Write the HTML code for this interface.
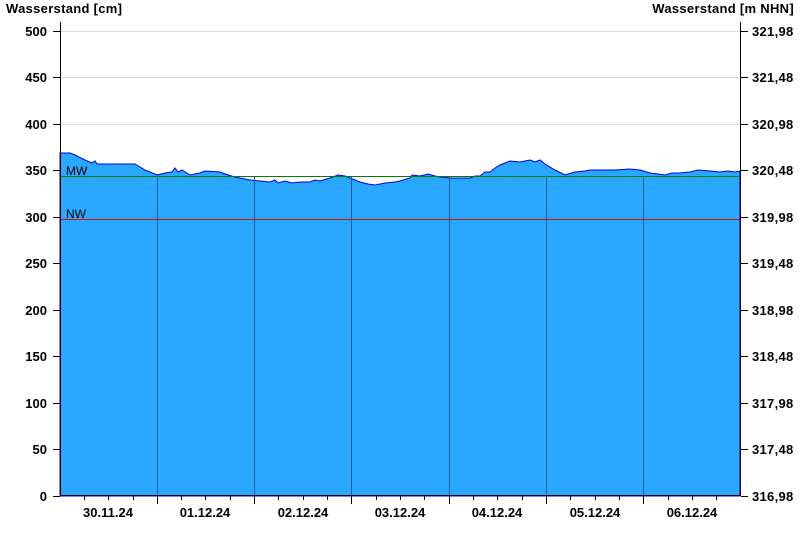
<!DOCTYPE html>
<html><head><meta charset="utf-8"><style>
html,body{margin:0;padding:0;background:#fff;width:800px;height:550px;overflow:hidden}
svg text{font-family:"Liberation Sans",Arial,sans-serif;font-weight:bold;font-size:13px;fill:#000}
</style></head><body>
<svg width="800" height="550" xmlns="http://www.w3.org/2000/svg">
<text x="6" y="13" style="letter-spacing:0.3px">Wasserstand [cm]</text>
<text x="794" y="13" text-anchor="end" style="letter-spacing:0.3px">Wasserstand [m NHN]</text>
<g stroke="#dcdcdc" stroke-width="1">
<line x1="60" y1="31.5" x2="740" y2="31.5"/><line x1="60" y1="77.5" x2="740" y2="77.5"/>
<line x1="60" y1="124.5" x2="740" y2="124.5"/>
</g>
<path fill="#2aa8ff" stroke="#0000e0" stroke-width="1" d="M60,496 L60,153 L70,153 L75,155 L85,160 L92,163 L95,161 L97,164 L135,164 L145,170 L150,172 L157,175 L165,173 L172,172 L175,168 L178,172 L182,170 L190,175 L200,173 L205,171 L220,172 L228,175 L235,177 L250,180 L260,181 L270,182 L275,180 L278,183 L285,181 L292,183 L300,182 L310,182 L315,180 L320,181 L330,178 L338,175 L345,176 L350,178 L360,182 L368,184 L375,185 L385,183 L395,182 L400,181 L410,178 L412,175 L420,176 L428,174 L435,176 L440,177 L450,178 L470,178 L475,176 L480,176 L485,172 L490,172 L495,168 L500,165 L505,163 L510,161 L520,162 L530,160 L535,162 L540,160 L545,164 L555,170 L565,175 L575,172 L585,171 L590,170 L600,170 L615,170 L630,169 L640,170 L650,173 L658,174 L665,175 L672,173 L680,173 L690,172 L698,170 L710,171 L720,172 L728,171 L735,172 L740,171 L740,496 Z"/>
<line x1="60" y1="176.5" x2="740" y2="176.5" stroke="#008000" stroke-width="1"/>
<line x1="60" y1="219.5" x2="740" y2="219.5" stroke="#d01010" stroke-width="1"/>
<g stroke="#1f5f8f" stroke-width="1">
<line x1="157.5" y1="176" x2="157.5" y2="496"/><line x1="254.5" y1="176" x2="254.5" y2="496"/>
<line x1="351.5" y1="176" x2="351.5" y2="496"/><line x1="449.5" y1="176" x2="449.5" y2="496"/>
<line x1="546.5" y1="176" x2="546.5" y2="496"/><line x1="643.5" y1="176" x2="643.5" y2="496"/>
</g>
<text x="66" y="175" style="font-weight:normal;font-size:12px">MW</text>
<text x="66" y="218" style="font-weight:normal;font-size:12px">NW</text>
<g stroke="#000" stroke-width="1">
<line x1="60.5" y1="22" x2="60.5" y2="496"/><line x1="740.5" y1="22" x2="740.5" y2="496"/>
<line x1="60" y1="495.5" x2="741" y2="495.5"/>
</g>
<g stroke="#000" stroke-width="1">
<path d="M53,31.5h7M53,77.5h7M53,124.5h7M53,170.5h7M53,217.5h7M53,263.5h7M53,310.5h7M53,356.5h7M53,403.5h7M53,449.5h7M53,496.5h7"/>
<path d="M741,31.5h7M741,77.5h7M741,124.5h7M741,170.5h7M741,217.5h7M741,263.5h7M741,310.5h7M741,356.5h7M741,403.5h7M741,449.5h7M741,496.5h7"/>
<path d="M157.5,496v8M254.5,496v8M351.5,496v8M449.5,496v8M546.5,496v8M643.5,496v8"/>
<path d="M84.5,496v4M108.5,496v4M133.5,496v4M181.5,496v4M205.5,496v4M230.5,496v4M278.5,496v4M303.5,496v4M327.5,496v4M376.5,496v4M400.5,496v4M424.5,496v4M473.5,496v4M497.5,496v4M522.5,496v4M570.5,496v4M595.5,496v4M619.5,496v4M668.5,496v4M692.5,496v4M716.5,496v4"/>
</g>
<g text-anchor="end">
<text x="47" y="36">500</text><text x="47" y="82">450</text><text x="47" y="129">400</text>
<text x="47" y="175">350</text><text x="47" y="222">300</text><text x="47" y="268">250</text>
<text x="47" y="315">200</text><text x="47" y="361">150</text><text x="47" y="408">100</text>
<text x="47" y="454">50</text><text x="47" y="501">0</text>
</g>
<g style="letter-spacing:0.3px">
<text x="752" y="36">321,98</text><text x="752" y="82">321,48</text><text x="752" y="129">320,98</text>
<text x="752" y="175">320,48</text><text x="752" y="222">319,98</text><text x="752" y="268">319,48</text>
<text x="752" y="315">318,98</text><text x="752" y="361">318,48</text><text x="752" y="408">317,98</text>
<text x="752" y="454">317,48</text><text x="752" y="501">316,98</text>
</g>
<g text-anchor="middle">
<text x="108" y="517">30.11.24</text><text x="205" y="517">01.12.24</text><text x="303" y="517">02.12.24</text>
<text x="400" y="517">03.12.24</text><text x="497" y="517">04.12.24</text><text x="595" y="517">05.12.24</text>
<text x="692" y="517">06.12.24</text>
</g>
</svg>
</body></html>
